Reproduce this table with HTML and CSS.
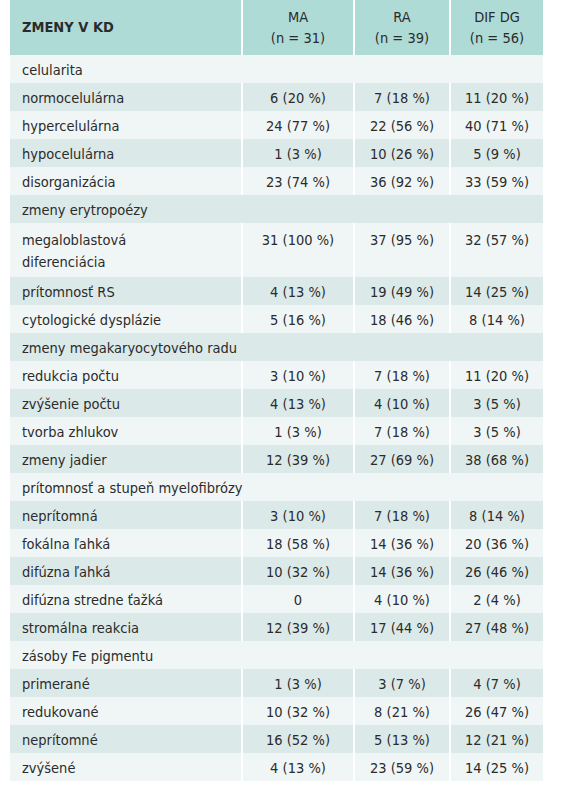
FILE: index.html
```html
<!DOCTYPE html>
<html lang="sk">
<head>
	<meta charset="UTF-8">
	<title>Zmeny v KD</title>
	<link rel="stylesheet" href="styles.css">
</head>
<body>
	<div class="wrap">
		<table class="tab">
			<thead>
				<tr>
					<th class="first">ZMENY V KD</th>
					<th>MA<br>(n = 31)</th>
					<th>RA<br>(n = 39)</th>
					<th>DIF DG<br>(n = 56)</th>
				</tr>
			</thead>
			<tbody>
				<tr class="cat"><td colspan="4">celularita</td></tr>
				<tr><td>normocelulárna</td><td>6 (20 %)</td><td>7 (18 %)</td><td>11 (20 %)</td></tr>
				<tr><td>hypercelulárna</td><td>24 (77 %)</td><td>22 (56 %)</td><td>40 (71 %)</td></tr>
				<tr><td>hypocelulárna</td><td>1 (3 %)</td><td>10 (26 %)</td><td>5 (9 %)</td></tr>
				<tr><td>disorganizácia</td><td>23 (74 %)</td><td>36 (92 %)</td><td>33 (59 %)</td></tr>
				<tr class="cat"><td colspan="4">zmeny erytropoézy</td></tr>
				<tr class="tall"><td>megaloblastová<br>diferenciácia</td><td>31 (100 %)</td><td>37 (95 %)</td><td>32 (57 %)</td></tr>
				<tr><td>prítomnosť RS</td><td>4 (13 %)</td><td>19 (49 %)</td><td>14 (25 %)</td></tr>
				<tr><td>cytologické dysplázie</td><td>5 (16 %)</td><td>18 (46 %)</td><td>8 (14 %)</td></tr>
				<tr class="cat"><td colspan="4">zmeny megakaryocytového radu</td></tr>
				<tr><td>redukcia počtu</td><td>3 (10 %)</td><td>7 (18 %)</td><td>11 (20 %)</td></tr>
				<tr><td>zvýšenie počtu</td><td>4 (13 %)</td><td>4 (10 %)</td><td>3 (5 %)</td></tr>
				<tr><td>tvorba zhlukov</td><td>1 (3 %)</td><td>7 (18 %)</td><td>3 (5 %)</td></tr>
				<tr><td>zmeny jadier</td><td>12 (39 %)</td><td>27 (69 %)</td><td>38 (68 %)</td></tr>
				<tr class="cat"><td colspan="4">prítomnosť a stupeň myelofibrózy</td></tr>
				<tr><td>neprítomná</td><td>3 (10 %)</td><td>7 (18 %)</td><td>8 (14 %)</td></tr>
				<tr><td>fokálna ľahká</td><td>18 (58 %)</td><td>14 (36 %)</td><td>20 (36 %)</td></tr>
				<tr><td>difúzna ľahká</td><td>10 (32 %)</td><td>14 (36 %)</td><td>26 (46 %)</td></tr>
				<tr><td>difúzna stredne ťažká</td><td>0</td><td>4 (10 %)</td><td>2 (4 %)</td></tr>
				<tr><td>stromálna reakcia</td><td>12 (39 %)</td><td>17 (44 %)</td><td>27 (48 %)</td></tr>
				<tr class="cat"><td colspan="4">zásoby Fe pigmentu</td></tr>
				<tr><td>primerané</td><td>1 (3 %)</td><td>3 (7 %)</td><td>4 (7 %)</td></tr>
				<tr><td>redukované</td><td>10 (32 %)</td><td>8 (21 %)</td><td>26 (47 %)</td></tr>
				<tr><td>neprítomné</td><td>16 (52 %)</td><td>5 (13 %)</td><td>12 (21 %)</td></tr>
				<tr><td>zvýšené</td><td>4 (13 %)</td><td>23 (59 %)</td><td>14 (25 %)</td></tr>
			</tbody>
		</table>
	</div>
</body>
</html>
```

FILE: styles.css
```css
*{padding:0;margin:0;}
body{
	background:#fff;
	font-family:"DejaVu Sans Condensed","Liberation Sans",sans-serif;
	font-size:14.5px;
	color:#2b2b2b;
}
.wrap{
	padding:0 10px;
}
.tab{
	width:533px;
	border-collapse:collapse;
	table-layout:fixed;
}
.tab th{
	background:#afdbd7;
	height:55px;
	font-weight:normal;
	line-height:21px;
	text-align:center;
	vertical-align:middle;
	border-left:2px solid #fff;
	width:92px;
}
.tab th:nth-child(2){width:110px;}
.tab th:nth-child(3){width:94px;}
.tab th.first{
	border-left:0;
	text-align:left;
	padding-left:12px;
	width:auto;
	font-weight:bold;
}
.tab td{
	height:26px;
	padding-top:2px;
	line-height:18px;
	text-align:center;
	border-left:2px solid #fff;
	vertical-align:middle;
}
.tab td:first-child{
	text-align:left;
	padding-left:12px;
	border-left:0;
}
.tab tr.tall td{
	height:48px;
	vertical-align:top;
	padding-top:6px;
	line-height:22px;
}
.tab tbody tr:nth-child(odd){background:#f0f6f6;}
.tab tbody tr:nth-child(even){background:#dce9e9;}
```
